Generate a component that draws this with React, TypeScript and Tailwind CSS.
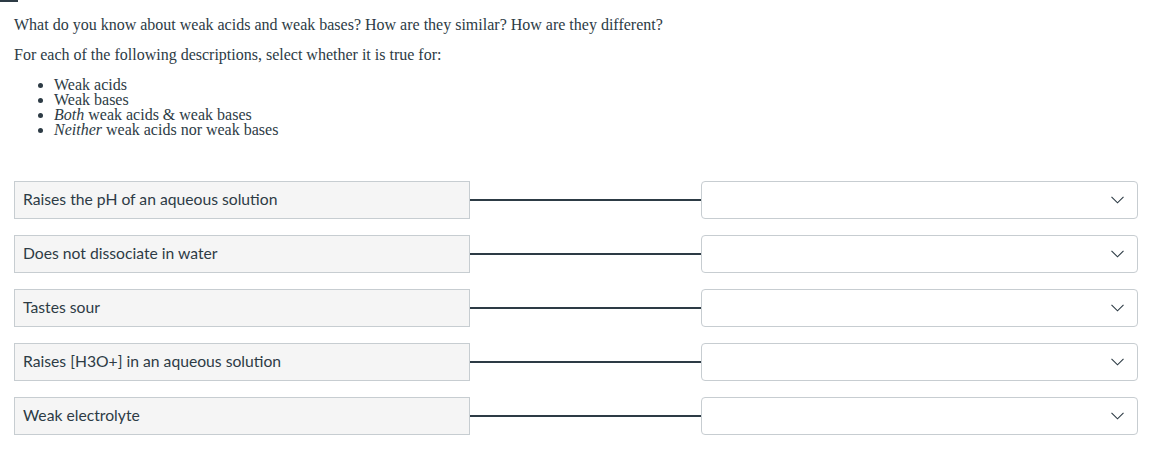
import React from 'react';

const rows = [
  'Raises the pH of an aqueous solution',
  'Does not dissociate in water',
  'Tastes sour',
  'Raises [H3O+] in an aqueous solution',
  'Weak electrolyte',
];

const Chevron = () => (
  <svg width="13" height="8" viewBox="0 0 13 8" fill="none" className="text-[#2d3b45]">
    <path d="M0.5 0.8 L6.5 6.8 L12.5 0.8" stroke="currentColor" strokeWidth="1.1" />
  </svg>
);

export default function App() {
  return (
    <div className="relative min-h-[462px] w-[1157px] bg-white text-[#2d3b45]">
      <div className="absolute left-0 top-0 h-[2px] w-[18px] bg-[#2d3b45]" />
      <div className="px-[14px] pt-[17px] font-['Liberation_Serif',serif] text-[16px] leading-[15px]">
        <p>
          What do you know about weak acids and weak bases? How are they similar? How are they different?
        </p>
        <p className="mt-[15px]">For each of the following descriptions, select whether it is true for:</p>
        <ul className="mt-[15px] list-disc pl-[40px]">
          <li>Weak acids</li>
          <li>Weak bases</li>
          <li>
            <em>Both</em> weak acids &amp; weak bases
          </li>
          <li>
            <em>Neither</em> weak acids nor weak bases
          </li>
        </ul>
      </div>

      <div className="mt-[44px] flex flex-col gap-[16px] px-[14px] font-['Lato',sans-serif]">
        {rows.map((label) => (
          <div key={label} className="flex h-[38px] items-center">
            <div className="flex h-full w-[456px] items-center border border-[#c7cdd1] bg-[#f5f5f5] pl-[8px] text-[15.7px]">
              {label}
            </div>
            <div className="h-[2px] w-[231px] bg-[#2d3b45]" />
            <div className="flex h-full w-[437px] items-center justify-end rounded-[4px] border border-[#c7cdd1] bg-white pr-[13px]">
              <Chevron />
            </div>
          </div>
        ))}
      </div>
    </div>
  );
}
